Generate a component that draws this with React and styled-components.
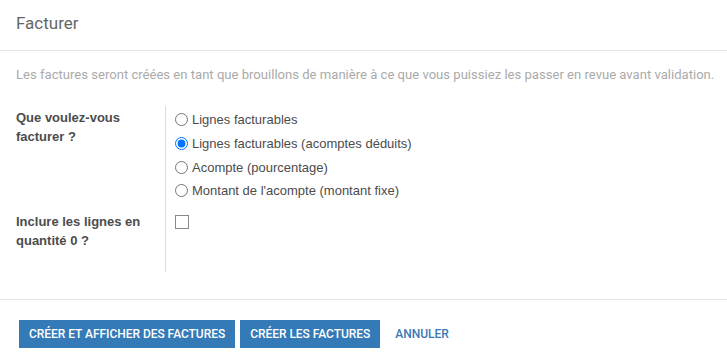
import React from "react";
import styled, { createGlobalStyle } from "styled-components";

const Global = createGlobalStyle`
  html, body { margin: 0; padding: 0; background: #fff; }
  body { font-family: Roboto, "Noto Sans", sans-serif; color: #4c4c4c; }
`;

const Modal = styled.div`
  width: 727px;
  height: 357px;
  display: flex;
  flex-direction: column;
  background: #fff;
`;

const Header = styled.div`
  height: 51px;
  box-sizing: border-box;
  padding: 13px 16px 0;
  border-bottom: 1px solid #e5e5e5;
`;

const Title = styled.h4`
  margin: 0;
  font-family: Roboto, sans-serif;
  font-weight: 400;
  font-size: 17px;
  line-height: 20px;
  color: #666;
`;

const Body = styled.div`
  flex: 1;
  padding: 15px 16px 0;
  box-sizing: border-box;
`;

const Description = styled.p`
  margin: 0 0 22px;
  font-size: 13.08px;
  line-height: 18px;
  color: #aaa;
  white-space: nowrap;
`;

const FormGrid = styled.div`
  display: grid;
  grid-template-columns: 149px 1fr;
`;

const Label = styled.div`
  font-family: "Liberation Sans", Arial, sans-serif;
  font-weight: 700;
  font-size: 13px;
  line-height: 19px;
  color: #4c4c4c;
  padding-top: ${(p) => p.$top || 0}px;
`;

const Field = styled.div`
  border-left: 1px solid #ddd;
  padding-left: 9px;
  padding-top: ${(p) => p.$top || 0}px;
  padding-bottom: ${(p) => p.$bottom || 0}px;
  display: flex;
  flex-direction: column;
`;

const RadioRow = styled.label`
  display: flex;
  align-items: center;
  height: 23.7px;
  gap: 4px;
  font-family: "Liberation Sans", Arial, sans-serif;
  font-size: 13px;
  color: #4c4c4c;
`;

const Radio = styled.input.attrs({ type: "radio" })`
  margin: 0;
  width: 13px;
  height: 13px;
  accent-color: #0075ff;
`;

const Check = styled.span`
  display: block;
  width: 12px;
  height: 12px;
  border: 1px solid #8a8a8a;
`;

const Footer = styled.div`
  border-top: 1px solid #e5e5e5;
  height: 58px;
  box-sizing: border-box;
  padding: 20px 19px 0;
  display: flex;
  align-items: flex-start;
  gap: 5px;
`;

const Button = styled.button`
  height: 28px;
  border: none;
  border-radius: 0;
  padding: 0 10px;
  background: ${(p) => (p.$link ? "transparent" : "#337ab7")};
  color: ${(p) => (p.$link ? "#3c78b5" : "#fff")};
  font-family: Roboto, sans-serif;
  font-weight: 500;
  font-size: 12px;
  letter-spacing: -0.04px;
  text-transform: uppercase;
  cursor: pointer;
`;

const options = [
  "Lignes facturables",
  "Lignes facturables (acomptes déduits)",
  "Acompte (pourcentage)",
  "Montant de l'acompte (montant fixe)",
];

export default function App() {
  return (
    <Modal>
      <Global />
      <Header>
        <Title>Facturer</Title>
      </Header>
      <Body>
        <Description>
          Les factures seront créées en tant que brouillons de manière à ce que vous puissiez les passer en revue avant validation.
        </Description>
        <FormGrid>
          <Label $top={2}>Que voulez-vous facturer ?</Label>
          <Field $top={2}>
            {options.map((o, i) => (
              <RadioRow key={o}>
                <Radio name="adv" defaultChecked={i === 1} />
                {o}
              </RadioRow>
            ))}
          </Field>
          <Label $top={9}>Inclure les lignes en quantité 0 ?</Label>
          <Field $top={12} $bottom={43}>
            <Check />
          </Field>
        </FormGrid>
      </Body>
      <Footer>
        <Button>Créer et afficher des factures</Button>
        <Button>Créer les factures</Button>
        <Button $link>Annuler</Button>
      </Footer>
    </Modal>
  );
}
